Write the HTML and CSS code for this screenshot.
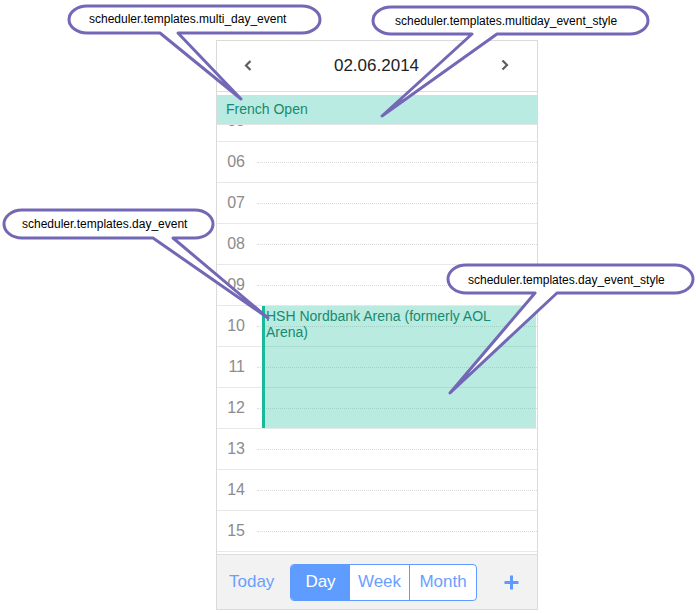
FILE: index.html
```html
<!DOCTYPE html>
<html>
<head>
<meta charset="utf-8">
<link rel="stylesheet" href="styles.css">
</head>
<body>
<div class="scheduler">
  <div class="header">
    <svg class="chev" width="8" height="12" viewBox="0 0 8 12"><polyline points="6.5,1 2,5.5 6.5,10" /></svg>
    <div class="date">02.06.2014</div>
    <svg class="chev" width="8" height="12" viewBox="0 0 8 12"><polyline points="1.5,0.5 6,5 1.5,9.5" /></svg>
  </div>
  <div class="multiday">
    <div class="md-event">French Open</div>
  </div>
  <div class="hours">
    <div class="hour"><div class="label">05</div><div class="cell"><div class="half"></div></div></div>
    <div class="hour"><div class="label">06</div><div class="cell"><div class="half"></div></div></div>
    <div class="hour"><div class="label">07</div><div class="cell"><div class="half"></div></div></div>
    <div class="hour"><div class="label">08</div><div class="cell"><div class="half"></div></div></div>
    <div class="hour"><div class="label">09</div><div class="cell"><div class="half"></div></div></div>
    <div class="hour"><div class="label">10</div><div class="cell"><div class="half"></div></div></div>
    <div class="hour"><div class="label">11</div><div class="cell"><div class="half"></div></div></div>
    <div class="hour"><div class="label">12</div><div class="cell"><div class="half"></div></div></div>
    <div class="hour"><div class="label">13</div><div class="cell"><div class="half"></div></div></div>
    <div class="hour"><div class="label">14</div><div class="cell"><div class="half"></div></div></div>
    <div class="hour"><div class="label">15</div><div class="cell"><div class="half"></div></div></div>
    <div class="hour"><div class="label"></div><div class="cell"><div class="half"></div></div></div>
    <div class="event">HSH Nordbank Arena (formerly AOL Arena)</div>
  </div>
  <div class="footer">
    <div class="today">Today</div>
    <div class="segmented">
      <div class="seg seg-day active">Day</div>
      <div class="seg seg-week">Week</div>
      <div class="seg seg-month">Month</div>
    </div>
    <svg class="plus" width="15" height="15" viewBox="0 0 15 15"><line x1="7.5" y1="0.5" x2="7.5" y2="14.5"/><line x1="0.5" y1="7.5" x2="14.5" y2="7.5"/></svg>
  </div>
</div>

<svg class="callouts" width="696" height="613" viewBox="0 0 696 613">
  <path d="M87,6 H302 A18 13.5 0 0 1 320 19.5 A18 13.5 0 0 1 302 33 H178 L241,99 L160,33 H87 A18 13.5 0 0 1 69 19.5 A18 13.5 0 0 1 87 6 Z"/>
  <text x="89" y="23">scheduler.templates.multi_day_event</text>
  <path d="M391,7 H630 A18 13.5 0 0 1 648 20.5 A18 13.5 0 0 1 630 34 H497 L382,116 L472,34 H391 A18 13.5 0 0 1 373 20.5 A18 13.5 0 0 1 391 7 Z"/>
  <text x="395" y="25">scheduler.templates.multiday_event_style</text>
  <path d="M22,210 H195 A18 14 0 0 1 213 224 A18 14 0 0 1 195 238 H173 L268,318 L153,238 H22 A18 14 0 0 1 4 224 A18 14 0 0 1 22 210 Z"/>
  <text x="22" y="228">scheduler.templates.day_event</text>
  <path d="M466,265 H675 A18 14 0 0 1 693 279 A18 14 0 0 1 675 293 H557 L450,393 L535,293 H466 A18 14 0 0 1 448 279 A18 14 0 0 1 466 265 Z"/>
  <text x="468" y="284">scheduler.templates.day_event_style</text>
</svg>
</body>
</html>
```

FILE: styles.css
```css
html, body {
  margin: 0;
  padding: 0;
  background: #fff;
}
body {
  position: relative;
  width: 696px;
  height: 613px;
  overflow: hidden;
  font-family: "Liberation Sans", Arial, sans-serif;
}
.scheduler {
  margin: 40px 0 0 216px;
  width: 322px;
  height: 570px;
  box-sizing: border-box;
  border: 1px solid #dadada;
  display: flex;
  flex-direction: column;
  background: #fff;
}
.header {
  height: 50px;
  flex: none;
  border-bottom: 1px solid #dedede;
  display: flex;
  align-items: center;
  justify-content: space-between;
  padding: 0 28px 0 27px;
}
.chev polyline {
  fill: none;
  stroke: #5e5e5e;
  stroke-width: 2.2;
}
.date {
  font-size: 17px;
  color: #222;
}
.multiday {
  flex: none;
  padding-top: 3px;
  border-bottom: 1px solid #e3e3e3;
}
.md-event {
  height: 29px;
  line-height: 29px;
  background: #b9ebe3;
  color: #178a6f;
  font-size: 14px;
  padding-left: 9px;
}
.hours {
  height: 429px;
  flex: none;
  overflow: hidden;
  position: relative;
}
.hour {
  display: flex;
  height: 40px;
  border-bottom: 1px solid #e8e8e8;
}
.hour:first-child {
  margin-top: -24px;
}
.label {
  width: 40px;
  box-sizing: border-box;
  padding-right: 12px;
  text-align: right;
  line-height: 40px;
  font-size: 16px;
  color: #8c8c8c;
  flex: none;
}
.cell {
  flex: 1;
  display: flex;
  align-items: center;
}
.half {
  flex: 1;
  border-top: 1px dotted #dcdcdc;
}
.event {
  position: absolute;
  top: 181px;
  left: 45px;
  right: 1px;
  height: 122px;
  box-sizing: border-box;
  border-left: 3px solid #17b99a;
  background: rgba(26, 188, 156, 0.3);
  color: #178a6f;
  font-size: 14px;
  line-height: 16px;
  padding: 2px 4px 0 1px;
}
.footer {
  flex: 1;
  border-top: 1px solid #dcdcdc;
  background: #f2f2f2;
  display: flex;
  align-items: center;
  padding-left: 12px;
}
.today {
  font-size: 17px;
  color: #6b9fff;
  width: 61px;
}
.segmented {
  display: flex;
  height: 37px;
  box-sizing: border-box;
  border: 1px solid #5f9bff;
  border-radius: 4px;
  overflow: hidden;
  background: #fff;
}
.seg {
  font-size: 17px;
  color: #6b9fff;
  display: flex;
  align-items: center;
  justify-content: center;
}
.seg-day { width: 59px; }
.seg-week { width: 59px; }
.seg-month { width: 66px; border-left: 1px solid #5f9bff; }
.seg.active {
  background: #5f9cff;
  color: #fff;
}
.plus {
  margin-left: 27px;
}
.plus line {
  stroke: #5f9bff;
  stroke-width: 3;
}
.callouts {
  position: absolute;
  left: 0;
  top: 0;
  pointer-events: none;
}
.callouts path {
  fill: #fff;
  stroke: #7368b5;
  stroke-width: 3;
  stroke-linejoin: round;
}
.callouts text {
  font-family: "Liberation Sans", Arial, sans-serif;
  font-size: 12px;
  fill: #000;
}
```
